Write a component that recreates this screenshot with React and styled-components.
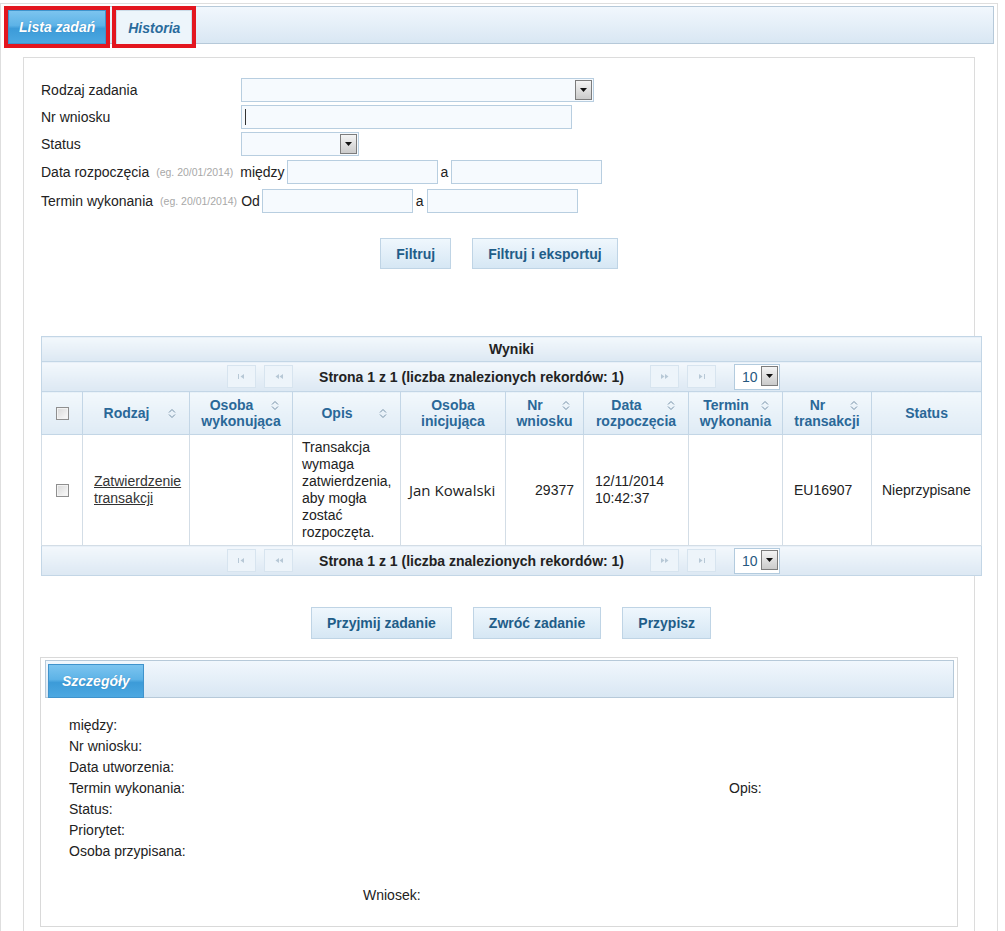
import React from 'react';
import styled, { createGlobalStyle, css } from 'styled-components';

const GlobalStyle = createGlobalStyle`
  html, body { margin: 0; padding: 0; background: #fff; }
  body {
    font-family: "Liberation Sans", Arial, sans-serif;
    font-size: 14px;
    color: #222;
  }
  * { box-sizing: border-box; }
`;

const Page = styled.div`
  padding-top: 3px;
  width: 998px;
`;

const Frame = styled.div`
  border: 1px solid #dedede;
  border-bottom: none;
  padding: 2px 3px 0 4px;
  min-height: 940px;
`;

const TabBar = styled.div`
  height: 38px;
  display: flex;
  align-items: flex-end;
  gap: 10px;
  padding-left: 2px;
  border: 1px solid #b6c9d9;
  background: linear-gradient(#f1f7fd, #d9e7f3);
`;

const Tab = styled.div`
  height: 34px;
  margin-bottom: -1px;
  padding: 0 ${(p) => p.$px || 10}px;
  display: flex;
  align-items: center;
  font-weight: bold;
  font-style: italic;
  font-size: 14px;
  ${(p) =>
    p.$active
      ? css`
          color: #fff;
          border: 1px solid #3f93cc;
          background: linear-gradient(#7cc4ef 0%, #5db3e7 45%, #3c9bd8 55%, #4ca8e1 100%);
          text-shadow: 0 0 1px rgba(0, 60, 110, 0.35);
        `
      : css`
          color: #2a6b9c;
          border: 1px solid #cbdbe8;
          border-bottom: none;
          background: #edf5fb;
        `}
  ${(p) =>
    p.$marked &&
    css`
      outline: 4px solid #e3161f;
    `}
`;

const Panel = styled.div`
  margin: 13px 19px 0 18px;
  border: 1px solid #dcdcdc;
  border-bottom: none;
  padding: 20px 0 30px 0;
  min-height: 880px;
`;

const Form = styled.div`
  padding-left: 17px;
  display: flex;
  flex-direction: column;
  gap: 3px;
`;

const FormRow = styled.div`
  display: flex;
  align-items: center;
  height: 24px;
  margin-top: ${(p) => p.$offset || 0}px;
`;

const Label = styled.span`
  width: ${(p) => (p.$w ? p.$w + 'px' : 'auto')};
  flex: none;
  white-space: nowrap;
`;

const Hint = styled.span`
  font-size: 10.5px;
  color: #a8a8a8;
  margin: 0 ${(p) => p.$mr || 6}px 0 7px;
  white-space: nowrap;
`;

const Word = styled.span`
  margin: ${(p) => p.$m || '0 2px 0 0'};
`;

const Field = styled.div`
  position: relative;
  width: ${(p) => p.$w}px;
  height: 24px;
  flex: none;
  border: 1px solid #b8cee0;
  background: #f6fafe;
`;

const Caret = styled.span`
  position: absolute;
  left: 3px;
  top: 3px;
  width: 1px;
  height: 16px;
  background: #333;
`;

const ArrowBox = styled.span`
  position: absolute;
  right: 1px;
  top: 1px;
  width: 17px;
  height: 20px;
  border: 1px solid #7c7c7c;
  background: linear-gradient(#f4f4f4, #cbcbcb);
  display: flex;
  align-items: center;
  justify-content: center;
`;

const SmallSelect = styled.div`
  position: relative;
  width: 46px;
  height: 26px;
  border: 1px solid #b3cbde;
  background: #fff;
  color: #27587f;
  font-size: 14px;
  font-weight: normal;
  display: flex;
  align-items: center;
  padding-left: 7px;
`;

const ButtonRow = styled.div`
  display: flex;
  justify-content: center;
  gap: 21px;
  margin: ${(p) => p.$m};
  width: ${(p) => (p.$w ? p.$w + 'px' : 'auto')};
`;

const Button = styled.div`
  height: ${(p) => p.$h || 31}px;
  padding: 0 15px;
  display: flex;
  align-items: center;
  border: 1px solid #bfd4e5;
  background: linear-gradient(#eff7fd, #d6e7f4);
  color: #1f5d88;
  font-weight: bold;
  font-size: 14px;
  white-space: nowrap;
`;

const Grid = styled.table`
  margin-left: 17px;
  width: 941px;
  border-collapse: collapse;
  table-layout: fixed;
`;

const BarCell = styled.td`
  height: ${(p) => p.$h}px;
  padding: 0;
  border: 1px solid #c3d6e6;
  background: linear-gradient(#f3f8fc, #dce8f3);
  text-align: center;
  font-weight: bold;
  color: #222;
`;

const Pager = styled.div`
  display: flex;
  align-items: center;
  justify-content: center;
  padding-right: 16px;
`;

const PageBtn = styled.span`
  width: 29px;
  height: 23px;
  border: 1px solid #d7e4ef;
  background: #edf4fa;
  display: flex;
  align-items: center;
  justify-content: center;
  margin-right: ${(p) => p.$mr || 0}px;
`;

const PagerText = styled.span`
  margin: 0 26px;
  font-weight: bold;
  color: #222;
`;

const HeadCell = styled.th`
  height: 43px;
  padding: 0 4px;
  border: 1px solid #c3d6e6;
  background: linear-gradient(#f2f8fc, #dfebf5);
  color: #2a6898;
  font-weight: bold;
  font-size: 14px;
  line-height: 16px;
  text-align: center;
  vertical-align: middle;
`;

const SortIcon = styled.span`
  float: right;
  width: 8px;
  height: 16px;
  margin: 0 9px 0 2px;
  display: flex;
  align-items: center;
`;

const Cell = styled.td`
  height: 111px;
  padding: 0 ${(p) => p.$pr ?? 8}px 0 ${(p) => p.$pl ?? 10}px;
  border: 1px solid #d3dde6;
  background: #fff;
  color: #222;
  line-height: 17px;
  vertical-align: middle;
  text-align: ${(p) => p.$align || 'left'};
  ${(p) =>
    p.$person &&
    css`
      font-family: "Open Sans", "Liberation Sans", sans-serif;
      font-size: 15px;
    `}
`;

const Link = styled.span`
  color: #333;
  text-decoration: underline;
`;

const Check = styled.span`
  display: block;
  margin: 0 auto;
  width: 13px;
  height: 13px;
  border: 1px solid #8f8f8f;
  background: linear-gradient(135deg, #d8d8d8, #fbfbfb);
  box-shadow: inset 0 0 0 1px #f3f3f3;
`;

const Details = styled.div`
  margin: 18px 0 0 16px;
  width: 918px;
  border: 1px solid #d9d9d9;
  padding: 2px 3px 20px 4px;
`;

const DetailsBody = styled.div`
  display: grid;
  grid-template-columns: 660px 1fr;
  padding: 17px 0 0 24px;
  line-height: 21px;
`;

const LabelList = styled.div`
  display: flex;
  flex-direction: column;
`;

const SideLabel = styled.div`
  align-self: center;
`;

const Footnote = styled.div`
  grid-column: 1 / -1;
  padding-left: 294px;
  margin-top: 23px;
`;

const DownArrow = () => (
  <svg width="7" height="4" viewBox="0 0 7 4">
    <path d="M0 0 H7 L3.5 4 Z" fill="#111" />
  </svg>
);

const Select = ({ w }) => (
  <Field $w={w}>
    <ArrowBox>
      <DownArrow />
    </ArrowBox>
  </Field>
);

const Sort = () => (
  <SortIcon>
    <svg width="8" height="11" viewBox="0 0 8 11">
      <path d="M1 4.5 L4 1.5 L7 4.5 M1 6.5 L4 9.5 L7 6.5" fill="none" stroke="#7590a7" strokeWidth="1" />
    </svg>
  </SortIcon>
);

const PagerIcon = ({ kind }) => {
  const c = '#b7c8d6';
  const shapes = {
    first: (
      <>
        <rect x="1" y="1" width="1" height="5" fill={c} />
        <path d="M7 1 L3.5 3.5 L7 6 Z" fill={c} />
      </>
    ),
    prev: (
      <>
        <path d="M5 1 L1.5 3.5 L5 6 Z" fill={c} />
        <path d="M9 1 L5.5 3.5 L9 6 Z" fill={c} />
      </>
    ),
    next: (
      <>
        <path d="M1 1 L4.5 3.5 L1 6 Z" fill={c} />
        <path d="M5 1 L8.5 3.5 L5 6 Z" fill={c} />
      </>
    ),
    last: (
      <>
        <path d="M2 1 L5.5 3.5 L2 6 Z" fill={c} />
        <rect x="7" y="1" width="1" height="5" fill={c} />
      </>
    ),
  };
  return (
    <svg width="10" height="7" viewBox="0 0 10 7">
      {shapes[kind]}
    </svg>
  );
};

const PagerBar = () => (
  <Pager>
    <PageBtn $mr={8}>
      <PagerIcon kind="first" />
    </PageBtn>
    <PageBtn>
      <PagerIcon kind="prev" />
    </PageBtn>
    <PagerText>Strona 1 z 1 (liczba znalezionych rekordów: 1)</PagerText>
    <PageBtn $mr={8}>
      <PagerIcon kind="next" />
    </PageBtn>
    <PageBtn $mr={18}>
      <PagerIcon kind="last" />
    </PageBtn>
    <SmallSelect>
      10
      <ArrowBox>
        <DownArrow />
      </ArrowBox>
    </SmallSelect>
  </Pager>
);

const columns = [41, 107, 103, 108, 105, 78, 105, 94, 89, 110];

const headers = [
  { sort: true, lines: ['Rodzaj'] },
  { sort: true, lines: ['Osoba', 'wykonująca'] },
  { sort: true, lines: ['Opis'] },
  { sort: false, lines: ['Osoba', 'inicjująca'] },
  { sort: true, lines: ['Nr', 'wniosku'] },
  { sort: true, lines: ['Data', 'rozpoczęcia'] },
  { sort: true, lines: ['Termin', 'wykonania'] },
  { sort: true, lines: ['Nr', 'transakcji'] },
  { sort: false, lines: ['Status'] },
];

const detailLabels = [
  'między:',
  'Nr wniosku:',
  'Data utworzenia:',
  'Termin wykonania:',
  'Status:',
  'Priorytet:',
  'Osoba przypisana:',
];

export default function App() {
  return (
    <>
      <GlobalStyle />
      <Page>
        <Frame>
          <TabBar>
            <Tab $active $marked>
              Lista zadań
            </Tab>
            <Tab $marked $px={11}>
              Historia
            </Tab>
          </TabBar>

          <Panel>
            <Form>
              <FormRow>
                <Label $w={200}>Rodzaj zadania</Label>
                <Select w={353} />
              </FormRow>
              <FormRow>
                <Label $w={200}>Nr wniosku</Label>
                <Field $w={331}>
                  <Caret />
                </Field>
              </FormRow>
              <FormRow>
                <Label $w={200}>Status</Label>
                <Select w={118} />
              </FormRow>
              <FormRow $offset={1}>
                <Label>Data rozpoczęcia</Label>
                <Hint $mr={7}>(eg. 20/01/2014)</Hint>
                <Word>między</Word>
                <Field $w={151} />
                <Word $m="0 3px 0 3px">a</Word>
                <Field $w={151} />
              </FormRow>
              <FormRow $offset={2}>
                <Label>Termin wykonania</Label>
                <Hint $mr={4}>(eg. 20/01/2014)</Hint>
                <Word>Od</Word>
                <Field $w={151} />
                <Word $m="0 3px 0 3px">a</Word>
                <Field $w={151} />
              </FormRow>
            </Form>

            <ButtonRow $m="25px 0 67px 0">
              <Button>Filtruj</Button>
              <Button>Filtruj i eksportuj</Button>
            </ButtonRow>

            <Grid>
              <colgroup>
                {columns.map((w, i) => (
                  <col key={i} style={{ width: w }} />
                ))}
              </colgroup>
              <tbody>
                <tr>
                  <BarCell $h={25} colSpan={10}>
                    Wyniki
                  </BarCell>
                </tr>
                <tr>
                  <BarCell $h={30} colSpan={10}>
                    <PagerBar />
                  </BarCell>
                </tr>
                <tr>
                  <HeadCell>
                    <Check />
                  </HeadCell>
                  {headers.map((h, i) => (
                    <HeadCell key={i}>
                      {h.sort && <Sort />}
                      {h.lines[0]}
                      {h.lines[1] && (
                        <>
                          <br />
                          {h.lines[1]}
                        </>
                      )}
                    </HeadCell>
                  ))}
                </tr>
                <tr>
                  <Cell $pl={0} $pr={0}>
                    <Check />
                  </Cell>
                  <Cell $pl={11}>
                    <Link>Zatwierdzenie transakcji</Link>
                  </Cell>
                  <Cell />
                  <Cell $pl={9} $pr={6}>
                    Transakcja wymaga zatwierdzenia, aby mogła zostać rozpoczęta.
                  </Cell>
                  <Cell $person $pl={8} $pr={4}>
                    Jan Kowalski
                  </Cell>
                  <Cell $align="right" $pr={9}>
                    29377
                  </Cell>
                  <Cell $pl={11}>12/11/2014 10:42:37</Cell>
                  <Cell />
                  <Cell $pl={11}>EU16907</Cell>
                  <Cell $pl={10} $pr={4}>
                    Nieprzypisane
                  </Cell>
                </tr>
                <tr>
                  <BarCell $h={30} colSpan={10}>
                    <PagerBar />
                  </BarCell>
                </tr>
              </tbody>
            </Grid>

            <ButtonRow $m="31px 0 0 17px" $w={940}>
              <Button $h={32}>Przyjmij zadanie</Button>
              <Button $h={32}>Zwróć zadanie</Button>
              <Button $h={32}>Przypisz</Button>
            </ButtonRow>

            <Details>
              <TabBar>
                <Tab $active $px={13}>
                  Szczegóły
                </Tab>
              </TabBar>
              <DetailsBody>
                <LabelList>
                  {detailLabels.map((l) => (
                    <div key={l}>{l}</div>
                  ))}
                </LabelList>
                <SideLabel>Opis:</SideLabel>
                <Footnote>Wniosek:</Footnote>
              </DetailsBody>
            </Details>
          </Panel>
        </Frame>
      </Page>
    </>
  );
}
